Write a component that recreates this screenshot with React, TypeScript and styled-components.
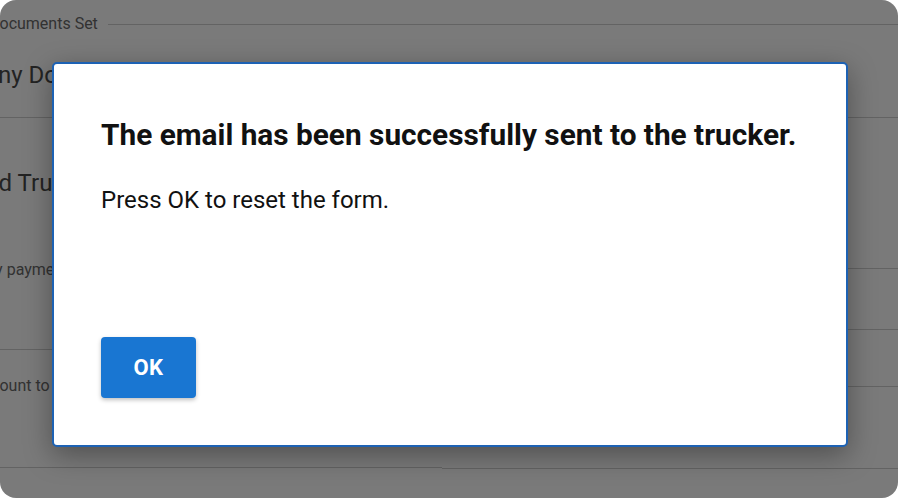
import React from "react";
import styled, { createGlobalStyle } from "styled-components";

const Global = createGlobalStyle`
  html, body { margin: 0; padding: 0; background: #ffffff; }
  body { font-family: Roboto, "Liberation Sans", Arial, sans-serif; }
`;

const Frame = styled.div`
  position: relative;
  width: 898px;
  height: 498px;
  border-radius: 16px;
  overflow: hidden;
  background: #ffffff;
`;

const Form = styled.div`
  display: grid;
  grid-template-columns: 442px 1fr;
  width: 898px;
`;

const Legend = styled.div`
  grid-column: 1 / 3;
  height: 48px;
  display: flex;
  align-items: center;
  gap: 10px;
  font-size: 16px;
  color: #6a6a6a;
  margin-left: -11px;
  padding-bottom: 2px;
  box-sizing: border-box;
  &::after {
    content: "";
    flex: 1;
    height: 1px;
    background: #cfcfcf;
    margin-top: 2px;
  }
`;

const Column = styled.div`
  display: flex;
  flex-direction: column;
`;

const Row = styled.div<{ $h: number; $line?: boolean }>`
  height: ${(p) => p.$h}px;
  box-sizing: border-box;
  display: flex;
  align-items: center;
  border-bottom: ${(p) => (p.$line === false ? "none" : "1px solid #d0d0d0")};
`;

const Label = styled.span<{ $size: number; $shift: number; $dy?: number; $soft?: boolean }>`
  font-size: ${(p) => p.$size}px;
  color: ${(p) => (p.$soft ? "#6a6a6a" : "#4a4a4a")};
  white-space: nowrap;
  margin-left: ${(p) => p.$shift}px;
  margin-top: ${(p) => p.$dy ?? 0}px;
`;

const Overlay = styled.div`
  position: absolute;
  inset: 0;
  background: rgba(0, 0, 0, 0.52);
  display: flex;
  justify-content: flex-start;
  align-items: flex-start;
  padding: 62px 0 0 52px;
  box-sizing: border-box;
`;

const Dialog = styled.div`
  width: 796px;
  height: 385px;
  box-sizing: border-box;
  background: #ffffff;
  border: 2px solid #1d62b4;
  border-radius: 5px;
  box-shadow: 0 8px 28px rgba(0, 0, 0, 0.35);
  padding: 53px 47px 47px 47px;
  display: flex;
  flex-direction: column;
`;

const Title = styled.h2`
  margin: 0;
  font-family: Roboto, "Liberation Sans", Arial, sans-serif;
  font-weight: 700;
  font-size: 29.8px;
  line-height: 36px;
  color: #111111;
  white-space: nowrap;
`;

const Message = styled.p`
  margin: 32px 0 0 0;
  font-size: 24px;
  line-height: 30px;
  color: #111111;
`;

const Actions = styled.div`
  margin-top: auto;
  display: flex;
`;

const OkButton = styled.button`
  width: 95px;
  height: 61px;
  padding: 0;
  border: none;
  border-radius: 4px;
  background: #1976d2;
  color: #ffffff;
  font-family: Roboto, "Liberation Sans", Arial, sans-serif;
  font-weight: 700;
  font-size: 22px;
  letter-spacing: 0.3px;
  box-shadow: 0 2px 4px rgba(0, 0, 0, 0.25);
  cursor: pointer;
`;

export default function App() {
  return (
    <>
      <Global />
      <Frame>
        <Form>
          <Legend>Documents Set</Legend>
          <Column>
            <Row $h={70}>
              <Label $size={24} $shift={-79} $dy={-16}>Company Documents</Label>
            </Row>
            <Row $h={112} $line={false}>
              <Label $size={24} $shift={-61} $dy={18}>Signed Trucker Agreement</Label>
            </Row>
            <Row $h={120}>
              <Label $size={16} $shift={-32} $dy={-40} $soft>Early payment terms</Label>
            </Row>
            <Row $h={118}>
              <Label $size={16} $shift={-25} $dy={-46} $soft>Amount to be paid</Label>
            </Row>
          </Column>
          <Column>
            <Row $h={70} />
            <Row $h={151} />
            <Row $h={61} />
            <Row $h={57} />
            <Row $h={82} />
          </Column>
        </Form>
        <Overlay>
          <Dialog role="dialog">
            <Title>The email has been successfully sent to the trucker.</Title>
            <Message>Press OK to reset the form.</Message>
            <Actions>
              <OkButton>OK</OkButton>
            </Actions>
          </Dialog>
        </Overlay>
      </Frame>
    </>
  );
}
